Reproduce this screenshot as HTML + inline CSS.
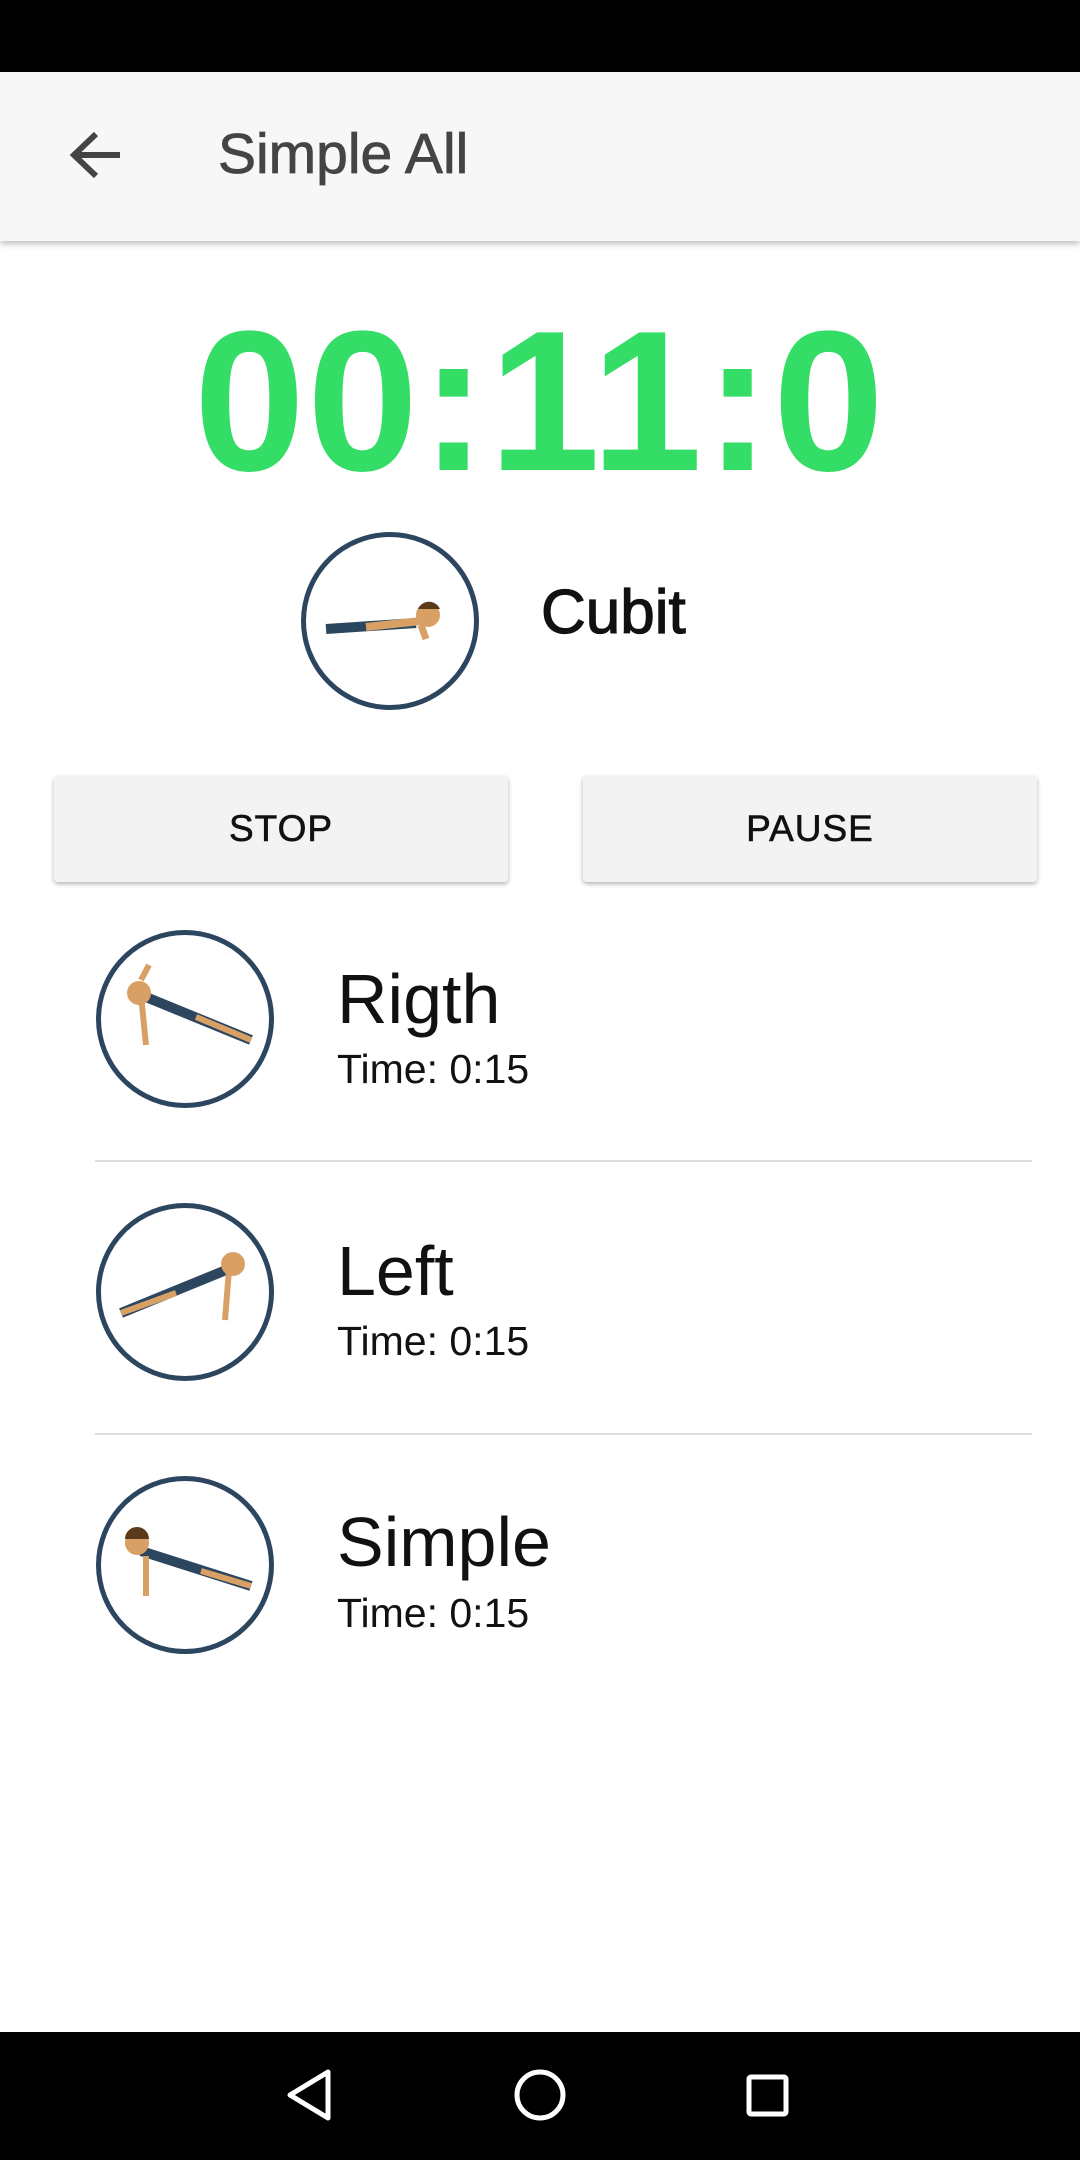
<!DOCTYPE html>
<html><head><meta charset="utf-8"><style>
html,body{margin:0;padding:0}
body{width:1080px;height:2160px;position:relative;background:#fff;font-family:"Liberation Sans",Roboto,sans-serif;overflow:hidden}
.abs{position:absolute}
.status{left:0;top:0;width:1080px;height:72px;background:#000}
.appbar{left:0;top:72px;width:1080px;height:169px;background:#f7f7f7;box-shadow:0 3px 6px rgba(0,0,0,.25)}
.title{left:218px;top:126px;font-size:57px;color:#444;line-height:1;-webkit-text-stroke:0.8px #444}
.timer{left:0;width:1080px;top:302px;text-align:center;font-size:200px;font-weight:bold;color:#33dd66;line-height:1;letter-spacing:2px}
.circ{border:5.5px solid #2d4660;border-radius:50%;box-sizing:border-box;width:178px;height:178px;background:#fff}
.btn{width:454px;height:106px;background:#f3f3f3;box-shadow:0 2px 5px rgba(0,0,0,.3);border-radius:4px;font-size:37px;display:flex;align-items:center;justify-content:center;color:#111;letter-spacing:1px;-webkit-text-stroke:0.6px #111}
.name{left:337px;font-size:70px;color:#111;line-height:1}
.time{left:337px;font-size:41px;color:#111;line-height:1}
.div{left:95px;width:937px;height:2px;background:#ddd}
.nav{left:0;top:2032px;width:1080px;height:128px;background:#000}
</style></head><body>
<div class="abs status"></div>
<div class="abs appbar"></div>
<svg class="abs" style="left:68px;top:130px" width="56" height="50" viewBox="0 0 56 50"><path d="M52 25H8M28 4L6 25L28 46" stroke="#444" stroke-width="6" fill="none"/></svg>
<div class="abs title">Simple All</div>
<div class="abs timer">00:11:0</div>

<div class="abs circ" style="left:301px;top:532px"><svg width="167" height="167" viewBox="0 0 167 167"><path d="M20 92L110 86" stroke="#2d4660" stroke-width="10"/><path d="M60 90L115 84" stroke="#d9a066" stroke-width="8"/><circle cx="122" cy="78" r="12" fill="#d9a066"/><path d="M112 72a12 12 0 0 1 22 0z" fill="#5a3a1a"/><path d="M115 88l5 14" stroke="#d9a066" stroke-width="7"/></svg></div>
<div class="abs" style="left:541px;top:582px;font-size:62px;color:#111;line-height:1;-webkit-text-stroke:1.2px #111">Cubit</div>

<div class="abs btn" style="left:54px;top:776px">STOP</div>
<div class="abs btn" style="left:583px;top:776px">PAUSE</div>

<div class="abs circ" style="left:96px;top:930px"><svg width="167" height="167" viewBox="0 0 167 167"><path d="M40 60L150 105" stroke="#2d4660" stroke-width="10"/><path d="M95 82L150 105" stroke="#d9a066" stroke-width="6"/><circle cx="38" cy="58" r="12" fill="#d9a066"/><path d="M40 60L45 110" stroke="#d9a066" stroke-width="6"/><path d="M40 45L48 30" stroke="#d9a066" stroke-width="6"/></svg></div>
<div class="abs name" style="left:337px;top:964px">Rigth</div>
<div class="abs time" style="left:337px;top:1049px">Time: 0:15</div>
<div class="abs div" style="top:1160px"></div>

<div class="abs circ" style="left:96px;top:1203px"><svg width="167" height="167" viewBox="0 0 167 167"><path d="M20 105L130 60" stroke="#2d4660" stroke-width="10"/><path d="M20 105L75 85" stroke="#d9a066" stroke-width="6"/><circle cx="132" cy="56" r="12" fill="#d9a066"/><path d="M128 62L124 112" stroke="#d9a066" stroke-width="6"/></svg></div>
<div class="abs name" style="left:337px;top:1236px">Left</div>
<div class="abs time" style="left:337px;top:1321px">Time: 0:15</div>
<div class="abs div" style="top:1433px"></div>

<div class="abs circ" style="left:96px;top:1476px"><svg width="167" height="167" viewBox="0 0 167 167"><path d="M40 70L150 105" stroke="#2d4660" stroke-width="10"/><path d="M100 90L150 105" stroke="#d9a066" stroke-width="6"/><circle cx="36" cy="62" r="12" fill="#d9a066"/><path d="M24 58a12 12 0 0 1 24 0z" fill="#5a3a1a"/><path d="M45 75L45 115" stroke="#d9a066" stroke-width="6"/></svg></div>
<div class="abs name" style="left:337px;top:1507px">Simple</div>
<div class="abs time" style="left:337px;top:1593px">Time: 0:15</div>

<div class="abs nav"></div>
<svg class="abs" style="left:0;top:2032px" width="1080" height="128"><path d="M328 40L290 63L328 86Z" stroke="#fff" stroke-width="5" fill="none" stroke-linejoin="round"/><circle cx="540" cy="63" r="23" stroke="#fff" stroke-width="5" fill="none"/><rect x="749" y="45" width="37" height="37" stroke="#fff" stroke-width="5" fill="none" rx="2"/></svg>
</body></html>
